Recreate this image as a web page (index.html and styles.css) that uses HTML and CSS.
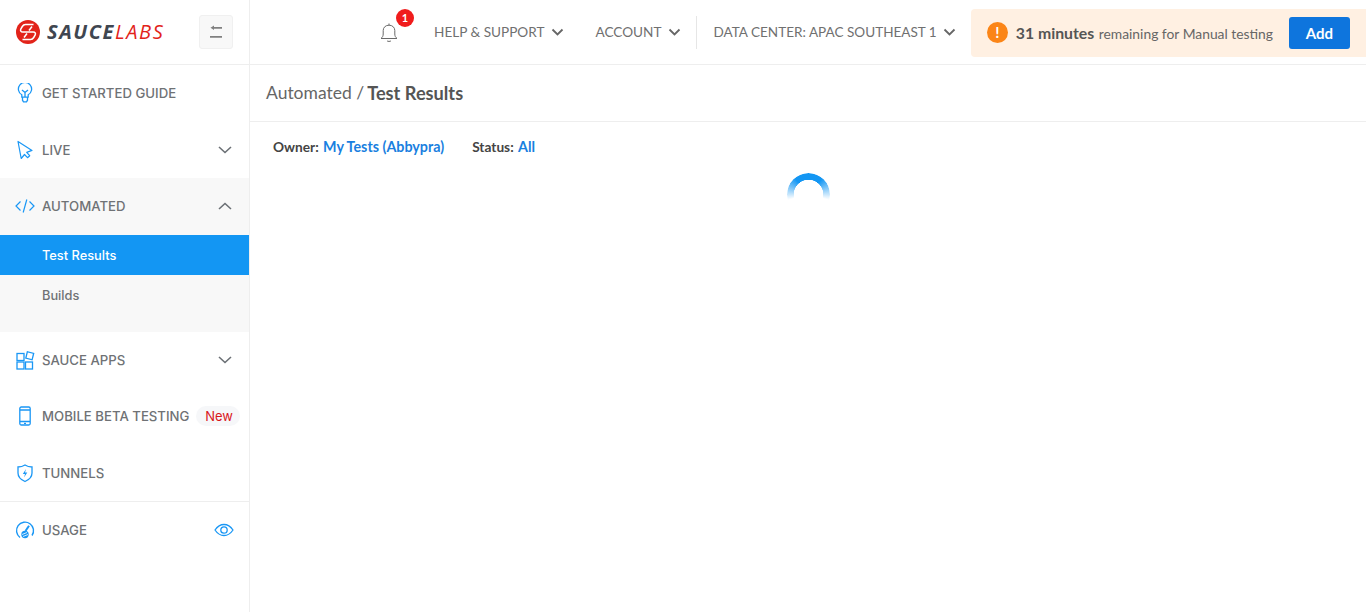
FILE: index.html
```html
<!DOCTYPE html>
<html lang="en">

<head>
    <meta charset="UTF-8">
    <title>Test Results</title>
    <link rel="stylesheet" href="styles.css">
</head>

<body>
    <aside class="sidebar">
        <div class="logo-bar">
            <div class="logo">
                <svg class="logo-mark" viewBox="0 0 24 24">
                    <circle cx="12" cy="12" r="12" fill="#e2231a"/>
                    <path d="M17.500 4.500H9.500c-1.500 0-2.500.8-3.200 2L4.800 9c-.8 1.600.2 3 1.900 3h10.600c1.700 0 2.700 1.400 1.900 3l-1.500 2.500c-.7 1.200-1.700 2-3.200 2h-8M16 6.500l-3 4M11 13.500l-3 4" fill="none" stroke="#fff" stroke-width="1.500"/>
                </svg>
                <span class="logo-text"><b>SAUCE</b><i>LABS</i></span>
            </div>
            <button class="collapse-btn">
                <svg viewBox="0 0 14 14" width="14" height="14">
                    <path d="M4 2.800h9M1 11.800h12" fill="none" stroke="#808080" stroke-width="1.800"/>
                    <path d="M1.500 2.800 5 .6v4.400z" fill="#808080"/>
                </svg>
            </button>
        </div>

        <a class="nav-item">
            <svg class="nav-icon" viewBox="0 0 20 20"><path d="M6.800 14.200v-2.400a6.600 6.600 0 1 1 6.400 0v2.400zM7.500 14.200v3l1 1.600h3l1-1.600v-3M7 7l3 2.500L13 7M10 9.500v4.700" fill="none" stroke="#1a97f5" stroke-width="1.300"/></svg>
            <span>GET STARTED GUIDE</span>
        </a>
        <a class="nav-item tall">
            <svg class="nav-icon" viewBox="0 0 20 20"><path d="M3 1.500 6.200 18.500l3.300-4 3 3.200 2.200-2-3-3.300 5.300-2z" fill="none" stroke="#1a97f5" stroke-width="1.200" stroke-linejoin="round"/></svg>
            <span>LIVE</span>
            <svg class="chevron" viewBox="0 0 14 8"><path d="M1 1l6 5.500L13 1" fill="none" stroke="#6b7075" stroke-width="1.600"/></svg>
        </a>
        <div class="nav-group">
            <a class="nav-item tall group-head">
                <svg class="nav-icon" viewBox="0 0 20 20"><path d="M5.500 5.500 1 10l4.500 4.500M14.500 5.500 19 10l-4.500 4.500M11.800 3.500 8.200 16.500" fill="none" stroke="#1a97f5" stroke-width="1.200"/></svg>
                <span>AUTOMATED</span>
                <svg class="chevron" viewBox="0 0 14 8"><path d="M1 7l6-5.500L13 7" fill="none" stroke="#6b7075" stroke-width="1.600"/></svg>
            </a>
            <a class="sub-item active">Test Results</a>
            <a class="sub-item">Builds</a>
        </div>
        <a class="nav-item">
            <svg class="nav-icon" viewBox="0 0 20 20"><g fill="none" stroke="#1a97f5" stroke-width="1.300"><rect x="2" y="3.500" width="7" height="7"/><rect x="2" y="12" width="7" height="7"/><rect x="10.500" y="12" width="7" height="7"/><rect x="11.500" y="2.500" width="6.500" height="6.500" transform="rotate(14 14.700 5.700)"/></g></svg>
            <span>SAUCE APPS</span>
            <svg class="chevron" viewBox="0 0 14 8"><path d="M1 1l6 5.500L13 1" fill="none" stroke="#6b7075" stroke-width="1.600"/></svg>
        </a>
        <a class="nav-item">
            <svg class="nav-icon" viewBox="0 0 20 20"><g fill="none" stroke="#1a97f5" stroke-width="1.300"><rect x="4.800" y="1" width="10.400" height="18" rx="1.500"/><path d="M5 4h10M5 15.500h10"/></g><rect x="9" y="16.800" width="2" height="1.200" fill="#1a97f5"/></svg>
            <span>MOBILE BETA TESTING</span>
            <span class="new-badge">New</span>
        </a>
        <a class="nav-item tall">
            <svg class="nav-icon" viewBox="0 0 20 20"><path d="M10 2c2 1.300 4.500 2 7 2v6c0 4-3 6.800-7 8.500C6 16.800 3 14 3 10V4c2.500 0 5-.7 7-2z" fill="none" stroke="#1a97f5" stroke-width="1.300"/><path d="M11 6 7.800 11H10l-1 3.500L12.300 9.500H10z" fill="#1a97f5"/></svg>
            <span>TUNNELS</span>
        </a>
        <a class="nav-item tall usage">
            <svg class="nav-icon" viewBox="0 0 20 20"><path d="M5 17.500A8.500 8.500 0 1 1 17 15.500" fill="none" stroke="#1a97f5" stroke-width="1.400"/><path d="M14 5.800 10.500 11" stroke="#1a97f5" stroke-width="2"/><circle cx="10" cy="14.500" r="3.700" fill="#1a97f5"/><path d="M7 14.500l5-2M8 16.500l5-2" stroke="#fff" stroke-width=".8"/></svg>
            <span>USAGE</span>
            <svg class="eye" viewBox="0 0 20 14"><path d="M1 7c2.500-3.700 5.500-5.500 9-5.500S16.500 3.300 19 7c-2.500 3.700-5.500 5.500-9 5.500S3.500 10.700 1 7z" fill="none" stroke="#1a97f5" stroke-width="1.300"/><circle cx="10" cy="7" r="3.200" fill="none" stroke="#1a97f5" stroke-width="1.300"/></svg>
        </a>
    </aside>

    <div class="content">
        <header class="topbar">
            <div class="bell">
                <svg viewBox="0 0 18 22" width="18" height="22"><path d="M1 17.500c1.500-1.200 2.200-2.500 2.200-4.500V9.500C3.200 6.500 5.500 4.200 9 4.200s5.800 2.300 5.800 5.300V13c0 2 .7 3.300 2.200 4.500zM9 4.200V2.500M7 19.800c.5.800 3.500.8 4 0" fill="none" stroke="#6a6a6a" stroke-width="1"/></svg>
                <span class="bell-count">1</span>
            </div>
            <a class="top-link help">HELP &amp; SUPPORT
                <svg class="top-chev" viewBox="0 0 12 8"><path d="M1 1.500l5 5 5-5" fill="none" stroke="#666" stroke-width="1.800"/></svg>
            </a>
            <a class="top-link account">ACCOUNT
                <svg class="top-chev" viewBox="0 0 12 8"><path d="M1 1.500l5 5 5-5" fill="none" stroke="#666" stroke-width="1.800"/></svg>
            </a>
            <a class="top-link data-center">DATA CENTER: APAC SOUTHEAST 1
                <svg class="top-chev" viewBox="0 0 12 8"><path d="M1 1.500l5 5 5-5" fill="none" stroke="#666" stroke-width="1.800"/></svg>
            </a>
            <div class="minutes">
                <span class="warn">!</span>
                <span class="minutes-text"><b>31 minutes</b> remaining for Manual testing</span>
                <button class="add-btn">Add</button>
            </div>
        </header>

        <div class="breadcrumb">Automated / <b>Test Results</b></div>

        <div class="filters">
            <span class="filter">Owner: <a>My Tests (Abbypra)</a></span>
            <span class="filter">Status: <a>All</a></span>
        </div>

        <div class="spinner-wrap">
            <div class="spinner"></div>
        </div>
    </div>
</body>

</html>
```

FILE: styles.css
```css
* {
    box-sizing: border-box;
}

html,
body {
    height: 100%;
}

body {
    margin: 0;
    display: flex;
    overflow: hidden;
    background: #fff;
    font-family: Lato, "Open Sans", sans-serif;
    color: #555;
}

/* sidebar */
.sidebar {
    width: 250px;
    flex: none;
    border-right: 1px solid #eee;
}

.logo-bar {
    height: 65px;
    border-bottom: 1px solid #eee;
    display: flex;
    align-items: center;
    justify-content: space-between;
    padding: 0 16px 1px 16px;
}

.logo {
    display: flex;
    align-items: center;
    gap: 7px;
}

.logo-mark {
    width: 24px;
    height: 24px;
}

.logo-text {
    font-family: "Open Sans", sans-serif;
    font-size: 20px;
    letter-spacing: 1.600px;
    font-style: italic;
    line-height: 24px;
}

.logo-text b {
    color: #3f4650;
    font-weight: 700;
}

.logo-text i {
    color: #e2231a;
    font-weight: 400;
}

.collapse-btn {
    width: 34px;
    height: 34px;
    padding: 0;
    background: #f8f8f8;
    border: 1px solid #f0f0f0;
    border-radius: 3px;
    display: flex;
    align-items: center;
    justify-content: center;
}

.nav-item {
    height: 56px;
    display: flex;
    align-items: center;
    padding: 0 17px 0 16px;
    font-family: Inter, sans-serif;
    font-size: 13.200px;
    font-weight: 500;
    color: #6f7275;
}

.nav-item.tall {
    height: 57px;
}

.nav-item.group-head {
    padding-bottom: 1px;
}

.nav-icon {
    width: 20px;
    height: 20px;
    flex: none;
    margin-right: 7px;
    margin-left: -1px;
}

.chevron {
    width: 14px;
    height: 8px;
    margin-left: auto;
}

.eye {
    width: 20px;
    height: 14px;
    margin-left: auto;
    margin-right: -2px;
}

.nav-group {
    background: #f8f8f8;
    height: 154px;
}

.sub-item {
    display: flex;
    align-items: center;
    height: 40px;
    padding: 1px 0 0 42px;
    font-family: Inter, sans-serif;
    font-size: 12.800px;
    font-weight: 500;
    color: #6f7275;
}

.sub-item.active {
    background: #1396f3;
    color: #fff;
}

.new-badge {
    margin-left: auto;
    margin-right: -8px;
    padding: 2px 7px 2px 9px;
    border-radius: 10px;
    background: #f6f7f9;
    color: #d9161b;
    font-size: 13px;
    font-weight: 400;
}

.usage {
    border-top: 1px solid #eee;
}

/* top bar */
.content {
    flex: 1;
    min-width: 0;
}

.topbar {
    height: 65px;
    border-bottom: 1px solid #eee;
    display: flex;
    align-items: center;
}

.bell {
    position: relative;
    margin-left: 130px;
    width: 18px;
    height: 22px;
}

.bell-count {
    position: absolute;
    left: 16px;
    top: -12px;
    width: 18px;
    height: 18px;
    border-radius: 50%;
    background: #f01c1c;
    color: #fff;
    font-size: 11px;
    font-weight: 700;
    line-height: 18px;
    text-align: center;
}

.top-link {
    display: flex;
    align-items: center;
    padding-bottom: 1px;
    font-size: 13.600px;
    color: #707070;
    white-space: nowrap;
}

.top-chev {
    width: 13px;
    height: 8px;
    margin-left: 7px;
}

.help {
    margin-left: 36px;
}

.account {
    margin-left: 31px;
}

.data-center {
    margin-left: 15px;
    padding-left: 16px;
    height: 33px;
    border-left: 1px solid #e6e6e6;
    font-size: 13.550px;
}

.data-center .top-chev {
    margin-left: 6px;
}

.minutes {
    margin-left: 15px;
    flex: 1;
    height: 48px;
    margin-top: 1px;
    background: #fff0e2;
    border-radius: 4px 0 0 4px;
    display: flex;
    align-items: center;
    padding-left: 16px;
}

.warn {
    width: 21px;
    height: 21px;
    border-radius: 50%;
    background: #fb8517;
    color: #fff;
    font-weight: 700;
    font-size: 15px;
    line-height: 21px;
    text-align: center;
    flex: none;
}

.minutes-text {
    margin-left: 8px;
    font-size: 13.850px;
    color: #666;
    white-space: nowrap;
}

.minutes-text b {
    margin-right: 1px;
    font-size: 15.800px;
    color: #555;
}

.add-btn {
    margin-left: 16px;
    width: 61px;
    height: 32px;
    border: 0;
    border-radius: 3px;
    background: #0e75dd;
    color: #fff;
    font-family: inherit;
    font-size: 15px;
    font-weight: 700;
}

/* main */
.breadcrumb {
    height: 57px;
    border-bottom: 1px solid #eee;
    display: flex;
    align-items: center;
    gap: 3px;
    padding: 0 0 1px 16px;
    font-size: 17.500px;
    color: #666;
}

.breadcrumb b {
    font-size: 18.200px;
    color: #555;
}

.filters {
    display: flex;
    gap: 28px;
    padding: 16px 0 0 23px;
    font-size: 13.700px;
    font-weight: 700;
    color: #444;
    line-height: 17px;
}

.filter a {
    margin-left: 1px;
    font-size: 14.300px;
    color: #1a7fe0;
}

.spinner-wrap {
    display: flex;
    justify-content: center;
    padding: 18px 0 0 0;
}

.spinner {
    width: 43px;
    height: 43px;
    border-radius: 50%;
    background: conic-gradient(from -105deg, rgba(19, 150, 243, 0) 0deg, #1396f3 65deg, #1396f3 145deg, rgba(19, 150, 243, 0) 210deg, rgba(19, 150, 243, 0) 360deg);
    -webkit-mask: radial-gradient(circle, transparent 14.500px, #000 15px);
    mask: radial-gradient(circle, transparent 14.500px, #000 15px);
}
```
